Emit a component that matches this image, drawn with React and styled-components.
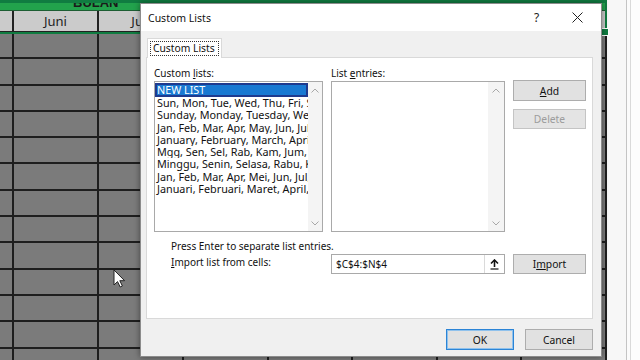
import styled, { createGlobalStyle } from "styled-components";

const GlobalStyle = createGlobalStyle`
  html, body { margin: 0; padding: 0; }
  body { background: #fff; font-family: "Noto Sans", "DejaVu Sans", sans-serif; }
  * { box-sizing: border-box; }
`;

const Screen = styled.div`
  position: relative;
  width: 640px;
  height: 360px;
  overflow: hidden;
  display: flex;
`;

const Sheet = styled.div`
  width: 607px;
  flex: none;
  display: grid;
  grid-template-columns: 14px 85px 85px 85px 84px 85px 84px 85px;
  grid-template-rows: 11px 22px repeat(13, 26.3px);
  background: #7a7a7a;
`;

const Banner = styled.div`
  grid-column: 1 / -1;
  background: #22a24c;
  border-bottom: 1px solid #1d5e33;
  display: flex;
  align-items: flex-end;
  padding: 0 0 1px 73px;
  font: bold 13px "Liberation Sans", sans-serif;
  line-height: 13px;
  color: #1a1a1a;
  overflow: hidden;
`;

const HeadCell = styled.div`
  background: #cbcbcb;
  border-right: 2px solid #222;
  border-bottom: 2px solid #222;
  display: flex;
  align-items: center;
  justify-content: center;
  font: 13px "Noto Sans", sans-serif;
  color: #222;
  overflow: hidden;
  white-space: nowrap;
`;

const Cell = styled.div`
  background: #7b7b7b;
  border-right: 2px solid #1e1e1e;
  border-bottom: 2px solid #1e1e1e;
`;

const Selection = styled.div`
  position: absolute;
  left: -10px;
  top: 0;
  width: 617px;
  height: 34px;
  border: 2px solid #107c41;
  border-top-width: 3px;

  &::after {
    content: "";
    position: absolute;
    right: -4px;
    bottom: -4px;
    width: 6px;
    height: 6px;
    background: #107c41;
    border: 1px solid #fff;
  }
`;

const RightPane = styled.div`
  flex: 1;
  background: linear-gradient(
    to right,
    #f7f7f7 19px,
    #c4c4c4 19px,
    #c4c4c4 20px,
    #fbfbfb 20px,
    #fbfbfb 23px,
    #dadada 23px,
    #dadada 24px,
    #fdfdfd 24px
  );
`;

const Cursor = styled.svg`
  position: absolute;
  left: 113px;
  top: 269px;
`;

const Dialog = styled.div`
  position: absolute;
  left: 140px;
  top: 3px;
  width: 462px;
  height: 354px;
  background: #f0f0f0;
  border: 1px solid #8c8c8c;
  box-shadow: 0 0 6px rgba(0, 0, 0, 0.45);
  display: flex;
  flex-direction: column;
`;

const TitleBar = styled.div`
  height: 27px;
  background: #fff;
  display: flex;
  align-items: center;
  padding: 0 3px 0 7px;
`;

const Title = styled.div`
  flex: 1;
  font-size: 10.5px;
  color: #111;
`;

const TitleButton = styled.div`
  width: 41px;
  height: 27px;
  display: flex;
  align-items: center;
  justify-content: center;
  font-size: 12px;
  color: #222;
`;

const Body = styled.div`
  flex: 1;
  display: flex;
  flex-direction: column;
  padding: 7px 8px 0 5px;
`;

const TabStrip = styled.div`
  display: flex;
  padding-left: 1px;
  height: 20px;
  margin-bottom: -1px;
  position: relative;
`;

const Tab = styled.div`
  width: 75px;
  height: 20px;
  background: #fff;
  border: 1px solid #d9d9d9;
  border-bottom: none;
  padding: 2px;
`;

const FocusBox = styled.div`
  height: 15px;
  border: 1px dotted #333;
  font-size: 10.3px;
  line-height: 13px;
  color: #111;
  padding-left: 2px;
  white-space: nowrap;
`;

const Panel = styled.div`
  height: 262px;
  background: #fff;
  border: 1px solid #d9d9d9;
  padding: 9px 6px 0 7px;
  display: grid;
  grid-template-columns: 169px 174px 73px;
  grid-template-rows: 14px 151px 22px 20px;
  align-content: start;
  column-gap: 8px;
  font-size: 10px;
  color: #111;
`;

const Label = styled.div`
  line-height: 12px;
  white-space: nowrap;
`;

const Key = styled.span`
  text-decoration: underline;
  text-underline-offset: 1px;
`;

const ListBox = styled.div`
  width: ${(p) => p.$width}px;
  border: 1px solid #a9a9a9;
  background: #fff;
  display: flex;
  overflow: hidden;
`;

const Items = styled.div`
  flex: 1;
  min-width: 0;
  padding-top: 1px;
  font-size: 10.8px;
`;

const Item = styled.div`
  height: ${(p) => (p.$selected ? 14 : 12.3)}px;
  line-height: ${(p) => (p.$selected ? 10 : 12.3)}px;
  white-space: nowrap;
  overflow: hidden;
  padding-left: ${(p) => (p.$selected ? 0 : 2)}px;
  background: ${(p) => (p.$selected ? "#1979d2" : "transparent")};
  border: ${(p) => (p.$selected ? "2px solid #1f3a8e" : "none")};
  color: ${(p) => (p.$selected ? "#fff" : "#111")};
`;

const ScrollBar = styled.div`
  width: ${(p) => p.$width}px;
  flex: none;
  background: #f4f4f4;
  display: flex;
  flex-direction: column;
  justify-content: space-between;
  align-items: center;
  padding: 6px 0 5px;
`;

const ButtonColumn = styled.div`
  display: flex;
  flex-direction: column;
  gap: 8px;
  margin-top: -1px;
`;

const Button = styled.div`
  height: ${(p) => p.$h || 21}px;
  width: ${(p) => p.$w || 73}px;
  background: ${(p) => (p.$disabled ? "#e4e4e4" : "#e1e1e1")};
  border: 1px solid ${(p) => (p.$default ? "#2b84d6" : p.$disabled ? "#c4c4c4" : "#adadad")};
  box-shadow: ${(p) => (p.$default ? "inset 0 0 0 1px #8fc1ec" : "none")};
  color: ${(p) => (p.$disabled ? "#9c9c9c" : "#111")};
  display: flex;
  align-items: center;
  justify-content: center;
  font-size: 10.3px;
`;

const Hint = styled.div`
  grid-column: 1 / -1;
  padding: 7px 0 0 17px;
  line-height: 14px;
`;

const ImportLabel = styled.div`
  padding: 2px 0 0 17px;
  line-height: 12px;
  white-space: nowrap;
`;

const RangeInput = styled.div`
  border: 1px solid #a9a9a9;
  background: #fff;
  display: flex;
  align-items: center;
  padding-left: 4px;
`;

const RangeText = styled.div`
  flex: 1;
  font-size: 10px;
  color: #111;
`;

const PickButton = styled.div`
  width: 20px;
  height: 18px;
  border-left: 1px solid #dadada;
  display: flex;
  align-items: center;
  justify-content: center;
`;

const Footer = styled.div`
  display: flex;
  justify-content: flex-end;
  gap: 11px;
  margin-top: 10px;
`;

const Chevron = ({ up }) => (
  <svg width="8" height="5" viewBox="0 0 8 5">
    <path
      d={up ? "M0.5 4.5 L4 1 L7.5 4.5" : "M0.5 0.5 L4 4 L7.5 0.5"}
      fill="none"
      stroke="#a8a8a8"
      strokeWidth="1"
    />
  </svg>
);

const customLists = [
  "Sun, Mon, Tue, Wed, Thu, Fri, Sat",
  "Sunday, Monday, Tuesday, Wednesday, Thursday",
  "Jan, Feb, Mar, Apr, May, Jun, Jul, Aug",
  "January, February, March, April, May",
  "Mgg, Sen, Sel, Rab, Kam, Jum, Sab",
  "Minggu, Senin, Selasa, Rabu, Kamis",
  "Jan, Feb, Mar, Apr, Mei, Jun, Jul, Agu",
  "Januari, Februari, Maret, April, Mei",
];

const months = ["", "Juni", "Juli", "Agustus", "September", "Oktober", "November", "Desember"];

export default function App() {
  const rows = Array.from({ length: 13 });
  return (
    <>
      <GlobalStyle />
      <Screen>
        <Sheet>
          <Banner>BULAN</Banner>
          {months.map((m, i) => (
            <HeadCell key={i}>{m}</HeadCell>
          ))}
          {rows.map((_, r) =>
            months.map((_, c) => <Cell key={r + "-" + c} />)
          )}
        </Sheet>
        <RightPane />
        <Selection />
        <Cursor width="13" height="19" viewBox="0 0 13 19">
          <path
            d="M1 1 L1 16 L4.5 12.6 L7.2 18 L9.4 17 L6.8 11.7 L11.6 11.7 Z"
            fill="#fff"
            stroke="#222"
            strokeWidth="1"
            strokeLinejoin="round"
          />
        </Cursor>

        <Dialog>
          <TitleBar>
            <Title>Custom Lists</Title>
            <TitleButton>?</TitleButton>
            <TitleButton>
              <svg width="11" height="11" viewBox="0 0 11 11">
                <path d="M0.5 0.5 L10.5 10.5 M10.5 0.5 L0.5 10.5" stroke="#222" strokeWidth="1" />
              </svg>
            </TitleButton>
          </TitleBar>
          <Body>
            <TabStrip>
              <Tab>
                <FocusBox>Custom Lists</FocusBox>
              </Tab>
            </TabStrip>
            <Panel>
              <Label>
                Custom <Key>l</Key>ists:
              </Label>
              <Label>
                List <Key>e</Key>ntries:
              </Label>
              <div />

              <ListBox $width={169}>
                <Items>
                  <Item $selected>NEW LIST</Item>
                  {customLists.map((t) => (
                    <Item key={t}>{t}</Item>
                  ))}
                </Items>
                <ScrollBar $width={14}>
                  <Chevron up />
                  <Chevron />
                </ScrollBar>
              </ListBox>
              <ListBox $width={174}>
                <Items />
                <ScrollBar $width={16}>
                  <Chevron up />
                  <Chevron />
                </ScrollBar>
              </ListBox>
              <ButtonColumn>
                <Button>
                  <Key>A</Key>dd
                </Button>
                <Button $disabled $h={20}>
                  Delete
                </Button>
              </ButtonColumn>

              <Hint>Press Enter to separate list entries.</Hint>

              <ImportLabel>
                <Key>I</Key>mport list from cells:
              </ImportLabel>
              <RangeInput>
                <RangeText>$C$4:$N$4</RangeText>
                <PickButton>
                  <svg width="9" height="11" viewBox="0 0 9 11">
                    <path d="M4.5 1 L4.5 8" stroke="#111" strokeWidth="1.6" />
                    <path d="M1 4.5 L4.5 1 L8 4.5" fill="none" stroke="#111" strokeWidth="1.6" />
                    <path d="M0.5 10 L8.5 10" stroke="#111" strokeWidth="1.2" />
                  </svg>
                </PickButton>
              </RangeInput>
              <Button $h={20}>
                I<Key>m</Key>port
              </Button>
            </Panel>
            <Footer>
              <Button $default $w={68}>
                OK
              </Button>
              <Button $w={68}>Cancel</Button>
            </Footer>
          </Body>
        </Dialog>
      </Screen>
    </>
  );
}
